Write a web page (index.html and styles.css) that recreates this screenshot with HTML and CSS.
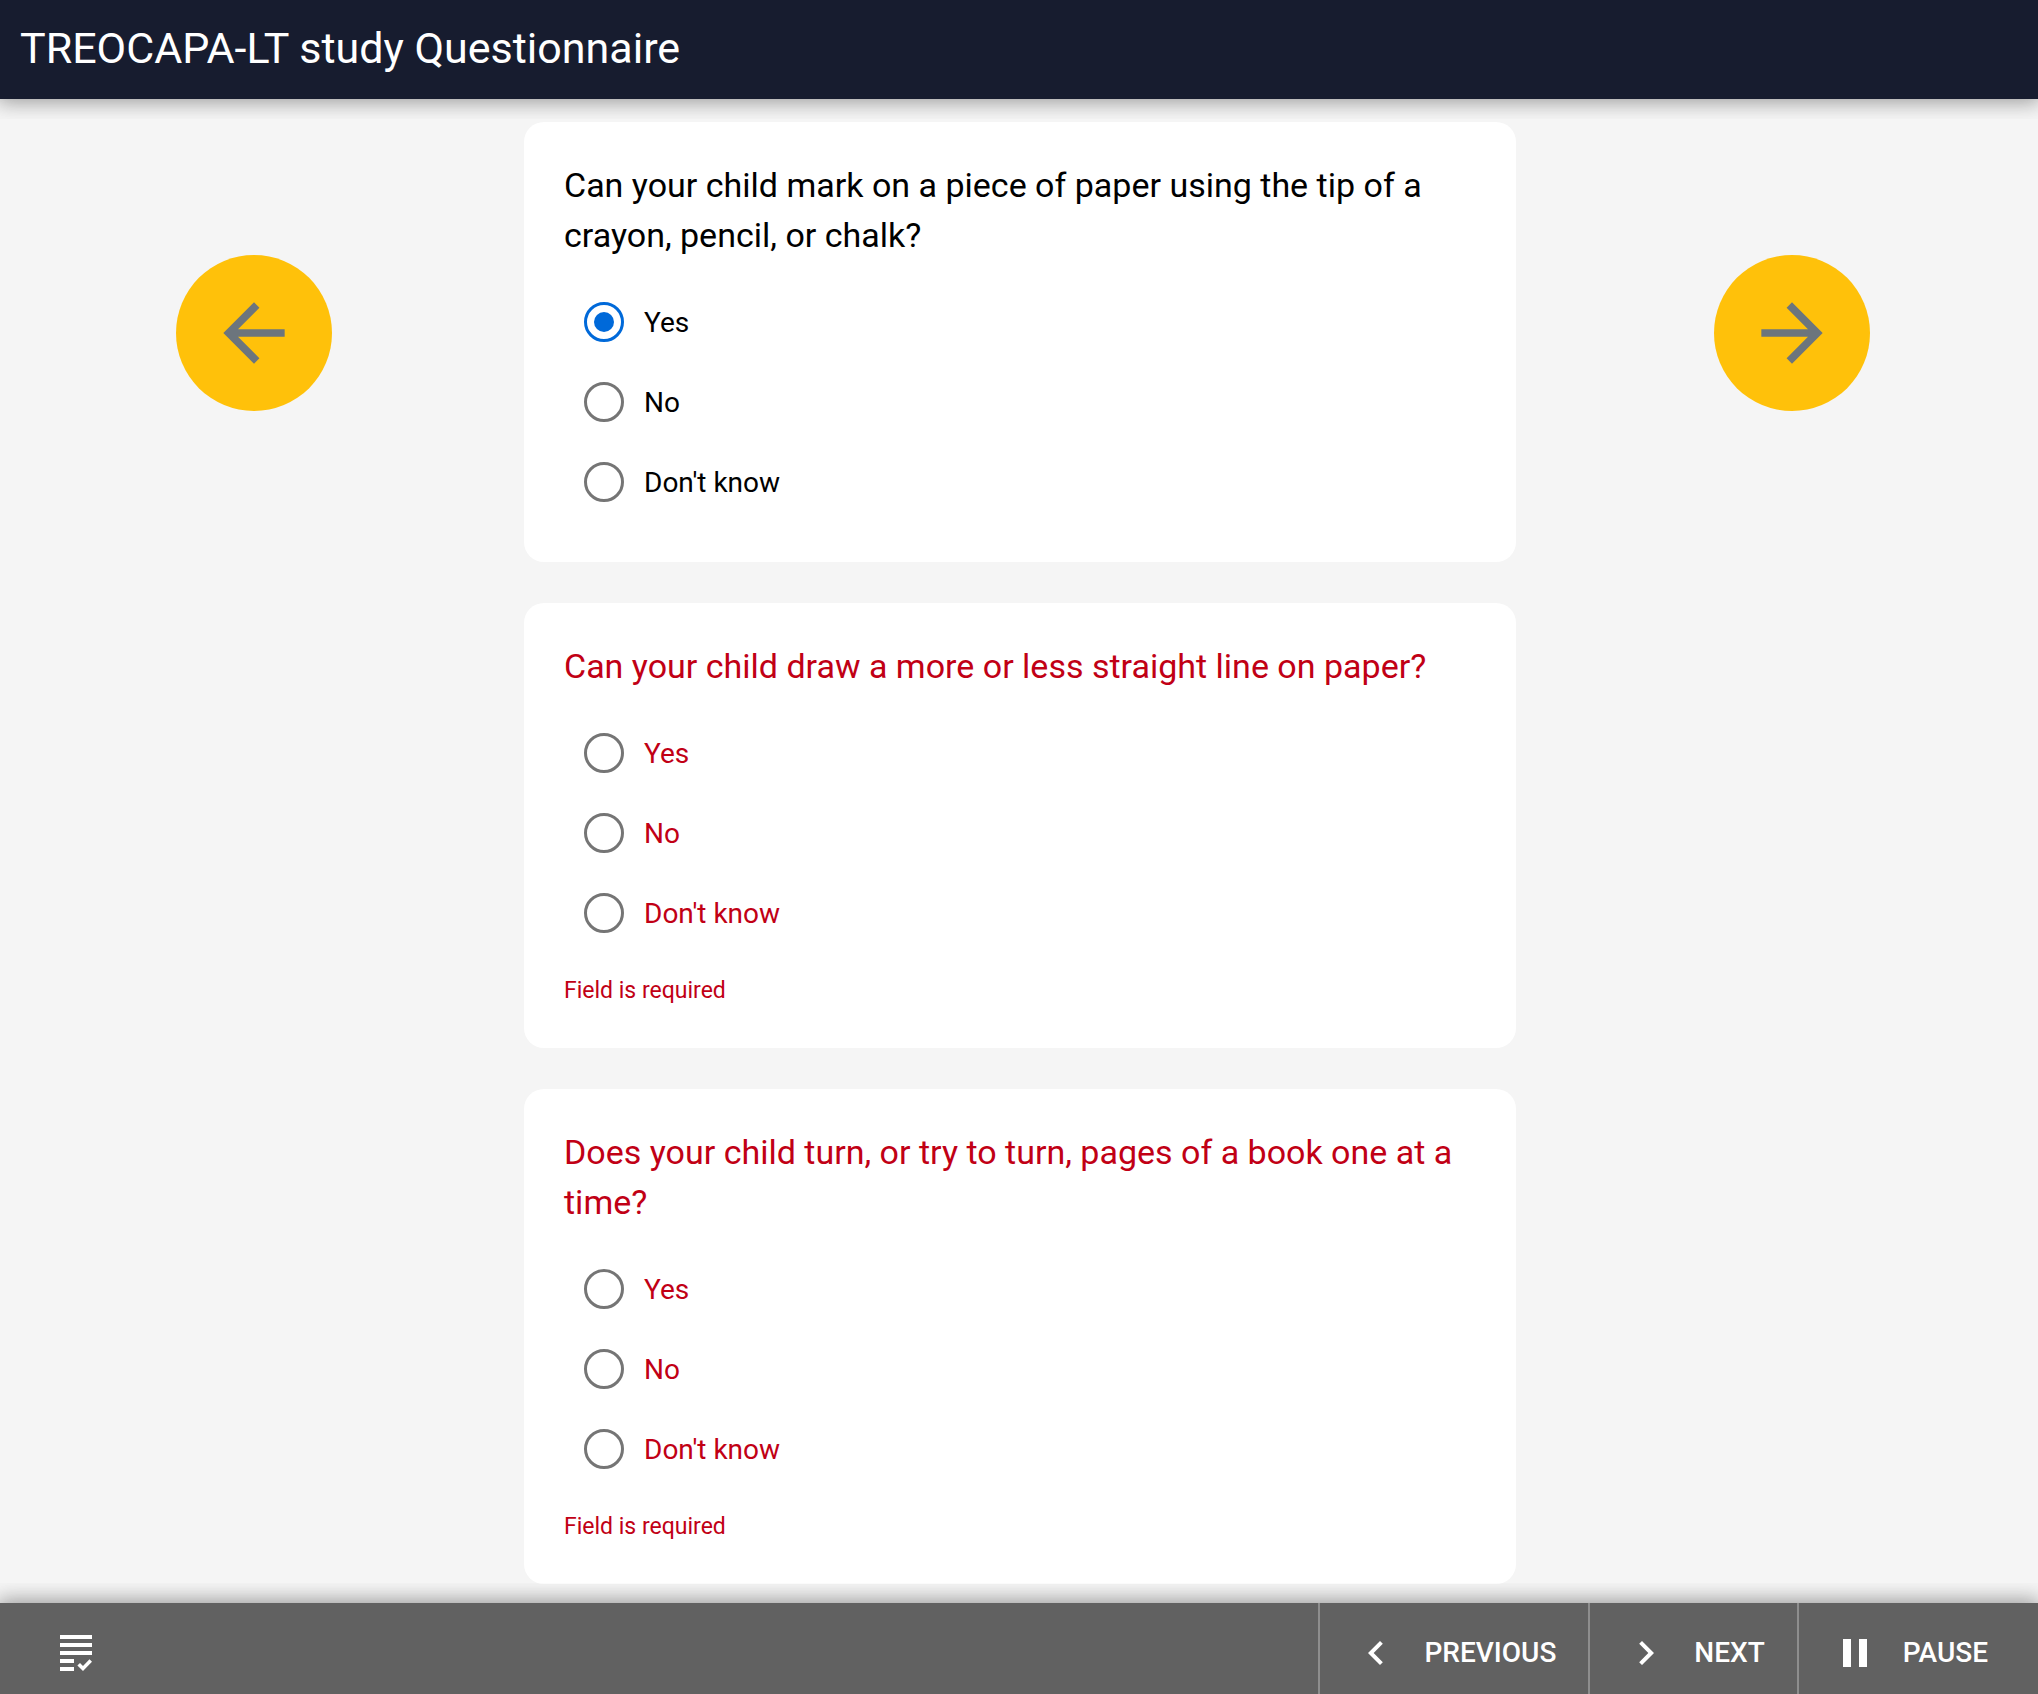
FILE: index.html
```html
<!DOCTYPE html>
<html lang="en">
<head>
<meta charset="utf-8">
<meta name="viewport" content="width=device-width, initial-scale=1">
<title>TREOCAPA-LT study Questionnaire</title>
<link rel="stylesheet" href="styles.css">
</head>
<body>
<header class="toolbar">
  <h1 class="toolbar-title">TREOCAPA-LT study Questionnaire</h1>
</header>

<main class="page">
  <div class="side side-prev">
    <button class="round-button" type="button" aria-label="Previous page">
      <svg class="arrow" viewBox="0 0 24 24" aria-hidden="true"><path d="M20 11H7.83l5.59-5.59L12 4l-8 8 8 8 1.41-1.41L7.83 13H20v-2z"/></svg>
    </button>
  </div>

  <form class="questions">
    <fieldset class="card">
      <legend class="question">Can your child mark on a piece of paper using the tip of a crayon, pencil, or chalk?</legend>
      <div class="options">
        <label class="option"><input class="radio" type="radio" name="mark" value="yes" checked>Yes</label>
        <label class="option"><input class="radio" type="radio" name="mark" value="no">No</label>
        <label class="option"><input class="radio" type="radio" name="mark" value="unknown">Don't know</label>
      </div>
    </fieldset>

    <fieldset class="card card-error">
      <legend class="question">Can your child draw a more or less straight line on paper?</legend>
      <div class="options">
        <label class="option"><input class="radio" type="radio" name="line" value="yes">Yes</label>
        <label class="option"><input class="radio" type="radio" name="line" value="no">No</label>
        <label class="option"><input class="radio" type="radio" name="line" value="unknown">Don't know</label>
      </div>
      <p class="message">Field is required</p>
    </fieldset>

    <fieldset class="card card-error">
      <legend class="question">Does your child turn, or try to turn, pages of a book one at a time?</legend>
      <div class="options">
        <label class="option"><input class="radio" type="radio" name="pages" value="yes">Yes</label>
        <label class="option"><input class="radio" type="radio" name="pages" value="no">No</label>
        <label class="option"><input class="radio" type="radio" name="pages" value="unknown">Don't know</label>
      </div>
      <p class="message">Field is required</p>
    </fieldset>
  </form>

  <div class="side side-next">
    <button class="round-button" type="button" aria-label="Next page">
      <svg class="arrow" viewBox="0 0 24 24" aria-hidden="true"><path d="M12 4l-1.41 1.41L16.17 11H4v2h12.17l-5.58 5.59L12 20l8-8z"/></svg>
    </button>
  </div>
</main>

<footer class="actions">
  <button class="overview" type="button" aria-label="Overview">
    <svg class="overview-icon" viewBox="0 0 32 36" aria-hidden="true"><path d="M0 0h32v4H0zM0 8h32v4H0zM0 16h32v4H0zM0 24h14v4H0zM0 32h14v4H0z"/><path d="M17.400 30.600l2.600-2.600 3 3 6.500-6.800 2.500 2.600-9 9.200z"/></svg>
  </button>
  <button class="action" type="button">
    <svg class="action-icon" viewBox="0 0 24 24" aria-hidden="true"><path d="M15.410 7.410L14 6l-6 6 6 6 1.410-1.410L10.830 12z"/></svg>
    PREVIOUS
  </button>
  <button class="action" type="button">
    <svg class="action-icon" viewBox="0 0 24 24" aria-hidden="true"><path d="M10 6L8.590 7.410 13.170 12l-4.580 4.590L10 18l6-6z"/></svg>
    NEXT
  </button>
  <button class="action action-last" type="button">
    <svg class="action-icon" viewBox="0 0 24 24" aria-hidden="true"><path d="M6 19h4V5H6v14zm8-14v14h4V5h-4z"/></svg>
    PAUSE
  </button>
</footer>
</body>
</html>
```
FILE: styles.css
```css
* {
  box-sizing: border-box;
}

body {
  display: flex;
  flex-direction: column;
  min-height: 100vh;
  margin: 0;
  background: #f5f5f5;
  color: #000;
  font-family: Roboto, "Liberation Sans", sans-serif;
  font-size: 28px;
}

button {
  border: 0;
  font: inherit;
  cursor: pointer;
}

/* Bars */
.toolbar,
.actions {
  position: sticky;
  z-index: 1;
  display: flex;
  box-shadow: 0 0 20px 4px rgba(0, 0, 0, 0.2), 0 0 20px rgba(0, 0, 0, 0.24);
  color: #fff;
}

.toolbar {
  top: 0;
  align-items: center;
  min-height: 99px;
  padding: 0 20px 2px;
  background: #171c2f;
  clip-path: inset(0 0 -20px 0);
}

.toolbar-title {
  margin: 0;
  font-size: 43px;
  font-weight: 400;
  line-height: 63px;
}

.actions {
  bottom: 0;
  min-height: 91px;
  background: #616161;
  clip-path: inset(-20px 0 0 0);
}

.overview,
.action {
  display: flex;
  align-items: center;
  background: none;
  color: inherit;
  fill: currentColor;
}

.overview {
  margin-right: auto;
  padding: 8px 60px 0;
}

.overview-icon {
  width: 32px;
  height: 36px;
}

.action {
  gap: 24px;
  padding: 8px 32px 0;
  border-left: 2px solid #8e8e8e;
  font-weight: 500;
}

.action-last {
  padding-right: 50px;
}

.action-icon {
  width: 48px;
  height: 48px;
}

/* Page */
.page {
  display: grid;
  flex: 1;
  grid-template-columns: 1fr 2fr 1fr;
  align-items: start;
  padding: 23px 1px 19px;
}

.side {
  display: flex;
  justify-content: center;
  padding-top: 133px;
}

.side-prev {
  padding-right: 3px;
}

.side-next {
  padding-left: 19px;
}

.round-button {
  display: flex;
  align-items: center;
  justify-content: center;
  width: 156px;
  height: 156px;
  padding: 0;
  border-radius: 50%;
  background: #ffc10a;
}

.arrow {
  width: 92px;
  height: 92px;
  fill: #6c757d;
}

.questions {
  display: flex;
  flex-direction: column;
  gap: 41px;
  padding: 0 12px 0 14px;
}

.card {
  min-width: 0;
  margin: 0;
  padding: 38px 40px 40px;
  border: 0;
  border-radius: 20px;
  background: #fff;
}

.card-error {
  color: #c10015;
}

.question {
  float: left;
  width: 100%;
  margin-bottom: 22px;
  padding: 0;
  font-size: 34px;
  line-height: 50px;
}

.options {
  display: flex;
  clear: both;
  flex-direction: column;
  align-items: flex-start;
  padding-left: 20px;
}

.option {
  display: flex;
  align-items: center;
  gap: 20px;
  min-height: 80px;
}

.radio {
  display: grid;
  place-items: center;
  appearance: none;
  width: 40px;
  height: 40px;
  margin: 0;
  border: 3px solid #757575;
  border-radius: 50%;
}

.radio:checked {
  border-color: #0069d9;
}

.radio:checked::before {
  content: "";
  width: 20px;
  height: 20px;
  border-radius: 50%;
  background: #0069d9;
}

.message {
  margin: 20px 0 0;
  font-size: 23px;
  line-height: 35px;
}
```
